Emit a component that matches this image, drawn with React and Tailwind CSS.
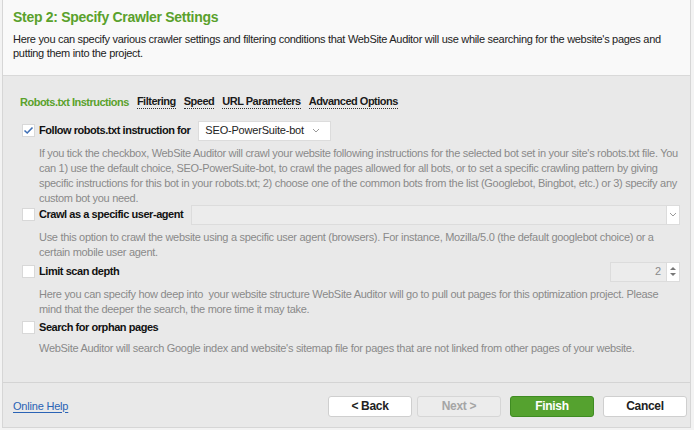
import React from "react";

function Check({ checked }) {
  return (
    <span className="w-[13px] h-[13px] bg-white border border-[#d8d8d8] flex items-center justify-center shrink-0">
      {checked && (
        <svg width="11" height="9" viewBox="0 0 11 9">
          <path d="M1.5 4.5 L4.2 7 L9.5 1.5" fill="none" stroke="#3f6fb5" strokeWidth="1.6" />
        </svg>
      )}
    </span>
  );
}

function Chevron() {
  return (
    <svg width="8" height="5" viewBox="0 0 8 5">
      <path d="M1 1 L4 4 L7 1" fill="none" stroke="#9a9a9a" strokeWidth="1" />
    </svg>
  );
}

function Desc({ children, className = "" }) {
  return (
    <p className={"pl-[36px] pr-[8px] text-[11px] tracking-[-0.3px] leading-[15px] text-[#8a8a8a] " + className}>{children}</p>
  );
}

function Label({ children, className = "" }) {
  return <span className={"ml-[4px] text-[11px] tracking-[-0.45px] font-bold text-[#111] " + className}>{children}</span>;
}

function Btn({ children, className = "" }) {
  return (
    <div className={"w-[84px] h-[21px] rounded-[3px] border flex items-center justify-center text-[12px] tracking-[-0.3px] font-bold " + className}>
      {children}
    </div>
  );
}

export default function App() {
  return (
    <div className="w-[694px] h-[430px] bg-[#f3f3f3] font-['Liberation_Sans',Arial,sans-serif] text-[#1a1a1a] overflow-hidden">
      <div className="ml-[2px] w-[689px] h-[428px] border-x border-b border-[#d6d6d6] flex flex-col">
        {/* Header */}
        <div className="h-[76px] shrink-0 bg-[#f9f9f9] border-b border-[#d9d9d9] px-[10px] pt-[9px]">
          <h1 className="text-[14px] tracking-[-0.3px] leading-[17px] font-bold text-[#5aa12c]">Step 2: Specify Crawler Settings</h1>
          <p className="mt-[6px] text-[11px] tracking-[-0.3px] leading-[14px] text-[#222]">
            Here you can specify various crawler settings and filtering conditions that WebSite Auditor will use while searching for the website's pages and putting them into the project.
          </p>
        </div>

        {/* Body */}
        <div className="flex-1 bg-[#e9e9e9] flex flex-col">
          <div className="flex items-center gap-[8px] pl-[17px] pt-[18px] text-[11px] tracking-[-0.5px] font-bold leading-[14px]">
            <span className="text-[#5aa12c]">Robots.txt Instructions</span>
            <span className="border-b border-dotted border-[#333]">Filtering</span>
            <span className="border-b border-dotted border-[#333]">Speed</span>
            <span className="border-b border-dotted border-[#333]">URL Parameters</span>
            <span className="border-b border-dotted border-[#333]">Advanced Options</span>
          </div>

          <div className="mt-[11px] flex items-center pl-[19px] h-[21px]">
            <Check checked />
            <Label>Follow robots.txt instruction for</Label>
            <div className="ml-[8px] w-[133px] h-[20px] bg-white border border-[#dcdcdc] flex items-center justify-between pl-[6px] pr-[10px] text-[11px] tracking-[-0.2px] text-[#222]">
              <span>SEO-PowerSuite-bot</span>
              <Chevron />
            </div>
          </div>
          <Desc className="mt-[5px]">
            If you tick the checkbox, WebSite Auditor will crawl your website following instructions for the selected bot set in your site's robots.txt file. You can 1) use the default choice, SEO-PowerSuite-bot, to crawl the pages allowed for all bots, or to set a specific crawling pattern by giving specific instructions for this bot in your robots.txt; 2) choose one of the common bots from the list (Googlebot, Bingbot, etc.) or 3) specify any custom bot you need.
          </Desc>

          <div className="mt-[-2px] flex items-center pl-[19px] h-[21px]">
            <Check />
            <Label>Crawl as a specific user-agent</Label>
            <div className="ml-[8px] flex-1 h-[20px] bg-[#ececec] border border-[#dcdcdc]" />
            <div className="mr-[10px] w-[13px] h-[20px] bg-white border border-l-0 border-[#dcdcdc] flex items-center justify-center">
              <Chevron />
            </div>
          </div>
          <Desc className="mt-[5px]">
            Use this option to crawl the website using a specific user agent (browsers). For instance, Mozilla/5.0 (the default googlebot choice) or a certain mobile user agent.
          </Desc>

          <div className="mt-[1px] flex items-center pl-[19px] pr-[10px] h-[21px]">
            <Check />
            <Label className="flex-1">Limit scan depth</Label>
            <div className="w-[57px] h-[20px] bg-[#ececec] border border-[#dcdcdc] flex items-center justify-end pr-[5px] text-[11px] text-[#8a8a8a]">
              2
            </div>
            <div className="w-[13px] h-[20px] bg-white border border-l-0 border-[#dcdcdc] flex flex-col items-center justify-center gap-[3px]">
              <svg width="6" height="3" viewBox="0 0 6 3"><path d="M0 3 L3 0 L6 3 Z" fill="#777" /></svg>
              <svg width="6" height="3" viewBox="0 0 6 3"><path d="M0 0 L3 3 L6 0 Z" fill="#777" /></svg>
            </div>
          </div>
          <Desc className="mt-[5px]">
            Here you can specify how deep into&nbsp; your website structure WebSite Auditor will go to pull out pages for this optimization project. Please mind that the deeper the search, the more time it may take.
          </Desc>

          <div className="mt-[0px] flex items-center pl-[19px] h-[21px]">
            <Check />
            <Label>Search for orphan pages</Label>
          </div>
          <Desc className="mt-[3px]">
            WebSite Auditor will search Google index and website's sitemap file for pages that are not linked from other pages of your website.
          </Desc>

          <div className="flex-1" />
          <div className="h-[45px] shrink-0 border-t border-[#d4d4d4] flex items-center pl-[10px] pr-[3px] pt-[2px]">
            <span className="text-[11px] tracking-[-0.2px] text-[#2a63b5] underline underline-offset-2 flex-1">Online Help</span>
            <div className="flex items-center gap-[5px]">
              <Btn className="bg-white border-[#cfcfcf] text-[#222]">&lt; Back</Btn>
              <Btn className="bg-[#ececec] border-[#d6d6d6] text-[#a5a5a5]">Next &gt;</Btn>
              <Btn className="ml-[4px] bg-[#55a22f] border-[#3f8c22] text-white">Finish</Btn>
              <Btn className="ml-[4px] bg-white border-[#cfcfcf] text-[#222]">Cancel</Btn>
            </div>
          </div>
        </div>
      </div>
    </div>
  );
}
